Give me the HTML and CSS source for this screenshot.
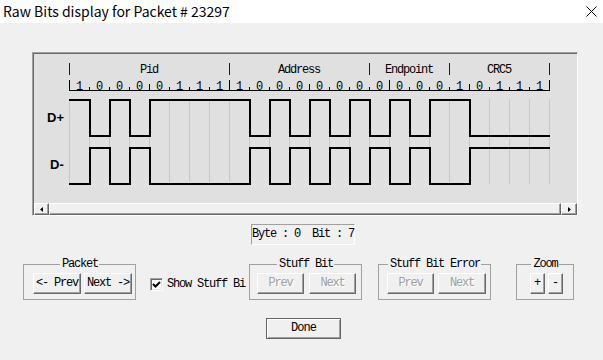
FILE: index.html
```html
<!DOCTYPE html>
<html>
<head>
<meta charset="utf-8">
<title>Raw Bits display</title>
<link rel="stylesheet" href="styles.css">
</head>
<body>
<div class="titlebar">
  <span class="title">Raw Bits display for Packet # 23297</span>
  <svg class="close" viewBox="0 0 11 11"><path d="M0.5 0.5L10.5 10.5M10.5 0.5L0.5 10.5" stroke="#000" stroke-width="1" fill="none"/></svg>
</div>
<div class="main">
  <div class="panel">
    <div class="panel-inner">
      <svg class="wave" width="543" height="149" viewBox="0 0 543 149">
        <g class="seg-ticks"><path d="M35.5 9V21M195.5 9V21M335.5 9V21M415.5 9V21M515.5 9V21" stroke="#0000ff" stroke-width="1" fill="none"/></g>
        <g class="seg-labels">
          <text x="115" y="19">Pid</text>
          <text x="265" y="19">Address</text>
          <text x="375" y="19">Endpoint</text>
          <text x="465" y="19">CRC5</text>
        </g>
        <path class="ruler" d="M35.5 26V37M55.5 33V37M75.5 33V37M95.5 33V37M115.5 30V37M135.5 33V37M155.5 33V37M175.5 33V37M195.5 26V37M215.5 33V37M235.5 33V37M255.5 33V37M275.5 30V37M295.5 33V37M315.5 33V37M335.5 33V37M355.5 26V37M375.5 33V37M395.5 33V37M415.5 33V37M435.5 30V37M455.5 33V37M475.5 33V37M495.5 33V37M515.5 26V37M35 36.5H516"/>
        <g class="bits">
          <text x="45" y="36">1</text><text x="65" y="36">0</text><text x="85" y="36">0</text><text x="105" y="36">0</text>
          <text x="125" y="36">0</text><text x="145" y="36">1</text><text x="165" y="36">1</text><text x="185" y="36">1</text>
          <text x="205" y="36">1</text><text x="225" y="36">0</text><text x="245" y="36">0</text><text x="265" y="36">0</text>
          <text x="285" y="36">0</text><text x="305" y="36">0</text><text x="325" y="36">0</text><text x="345" y="36">0</text>
          <text x="365" y="36">0</text><text x="385" y="36">0</text><text x="405" y="36">0</text><text x="425" y="36">1</text>
          <text x="445" y="36">0</text><text x="465" y="36">1</text><text x="485" y="36">1</text><text x="505" y="36">1</text>
        </g>
        <path class="grid" d="M35.5 45V130M55.5 45V130M75.5 45V130M95.5 45V130M115.5 45V130M135.5 45V130M155.5 45V130M175.5 45V130M195.5 45V130M215.5 45V130M235.5 45V130M255.5 45V130M275.5 45V130M295.5 45V130M315.5 45V130M335.5 45V130M355.5 45V130M375.5 45V130M395.5 45V130M415.5 45V130M435.5 45V130M455.5 45V130M475.5 45V130M495.5 45V130M515.5 45V130"/>
        <path class="signal" d="M35 46H56V82H76V46H96V82H116V46H216V82H236V46H256V82H276V46H296V82H316V46H336V82H356V46H376V82H396V46H436V82H516"/>
        <path class="signal" d="M35 130H56V94H76V130H96V94H116V130H216V94H236V130H256V94H276V130H296V94H316V130H336V94H356V130H376V94H396V130H436V94H516"/>
        <text class="line-label" x="13" y="68">D+</text>
        <text class="line-label" x="16" y="115">D-</text>
      </svg>
      <div class="scrollbar">
        <div class="sb-btn"><svg width="3" height="5" viewBox="0 0 3 5"><polygon points="0,2.5 3,0 3,5" fill="#000"/></svg></div>
        <div class="sb-thumb"></div>
        <div class="sb-btn sb-right"><svg width="3" height="5" viewBox="0 0 3 5"><polygon points="3,2.5 0,0 0,5" fill="#000"/></svg></div>
      </div>
    </div>
  </div>

  <div class="readout">Byte : 0  Bit : 7</div>

  <div class="controls">
    <fieldset class="group g-packet">
      <legend>Packet</legend>
      <button class="btn w48">&lt;- Prev</button>
      <button class="btn w48">Next -&gt;</button>
    </fieldset>
    <label class="check">
      <span class="box"><svg width="9" height="9" viewBox="0 0 9 9"><path d="M1 4L3.5 6.5L8 2" stroke="#000" stroke-width="2" fill="none"/></svg></span>
      <span class="check-text">Show Stuff Bi</span>
    </label>
    <fieldset class="group g-stuff">
      <legend>Stuff Bit</legend>
      <button class="btn w47" disabled>Prev</button>
      <button class="btn w47" disabled>Next</button>
    </fieldset>
    <fieldset class="group g-err">
      <legend>Stuff Bit Error</legend>
      <button class="btn w47" disabled>Prev</button>
      <button class="btn w48" disabled>Next</button>
    </fieldset>
    <fieldset class="group g-zoom">
      <legend>Zoom</legend>
      <button class="btn w15">+</button>
      <button class="btn w15">-</button>
    </fieldset>
  </div>

  <button class="btn done">Done</button>
</div>
</body>
</html>
```

FILE: styles.css
```css
* { box-sizing: border-box; }
html, body { margin: 0; padding: 0; }
body {
  width: 603px;
  height: 360px;
  background: #f0f0f0;
  overflow: hidden;
  font-family: "Liberation Mono", monospace;
  font-size: 12px;
  color: #000;
}

.titlebar {
  height: 23px;
  background: #fff;
  display: flex;
  align-items: center;
  justify-content: space-between;
  padding: 0 6px 0 3px;
}
.title {
  font-family: "Noto Sans CJK SC", "Noto Sans", sans-serif;
  font-size: 14px;
  line-height: 23px;
  color: #000;
}
.close { width: 11px; height: 11px; display: block; }

.main { display: flex; flex-direction: column; align-items: flex-start; }

.panel {
  margin: 29px 0 0 32px;
  width: 546px;
  height: 164px;
  border-style: solid;
  border-width: 1px;
  border-color: #a0a0a0 #ffffff #ffffff #a0a0a0;
}
.panel-inner {
  height: 100%;
  border-top: 1px solid #696969;
  border-left: 1px solid #696969;
  background: #e0e0e0;
  display: flex;
  flex-direction: column;
}
.wave { display: block; flex: none; }
.wave text {
  font-family: "Liberation Mono", monospace;
  font-size: 12px;
  letter-spacing: -1.2px;
  text-anchor: middle;
  fill: #000;
}
.wave .line-label {
  font-family: "Liberation Sans", Arial, sans-serif;
  font-weight: bold;
  font-size: 13px;
  letter-spacing: 0;
  text-anchor: start;
}
.ruler { stroke: #000; stroke-width: 1; fill: none; }
.grid { stroke: #c8c8c8; stroke-width: 1; fill: none; }
.signal { stroke: #000; stroke-width: 2; fill: none; }

.scrollbar {
  height: 12px;
  display: flex;
  background: #f0f0f0;
  flex: none;
}
.sb-btn, .sb-thumb, .btn {
  background: #f0f0f0;
  border-style: solid;
  border-width: 1px;
  border-color: #ffffff #696969 #696969 #ffffff;
  box-shadow: inset -1px -1px 0 #a0a0a0;
}
.sb-btn {
  width: 15px;
  display: flex;
  align-items: center;
  justify-content: center;
}
.sb-btn svg { display: block; }
.sb-right { width: 16px; }
.sb-thumb { flex: 1; }

.readout {
  margin: 8px 0 0 251px;
  width: 104px;
  height: 21px;
  border-style: solid;
  border-width: 1px;
  border-color: #a0a0a0 #ffffff #ffffff #a0a0a0;
  white-space: pre;
  line-height: 19px;
  letter-spacing: -1.2px;
}

.controls {
  display: flex;
  align-items: flex-start;
  margin-top: 13px;
  padding-left: 23px;
}
.group {
  margin: 0;
  min-width: 0;
  height: 42px;
  padding: 3px 0 5px;
  border: 1px solid #a0a0a0;
  display: flex;
}
.group legend {
  margin: 0 auto;
  padding: 0 1px 0 2px;
  font-size: 12px;
  line-height: 12px;
  letter-spacing: -1.2px;
}
.g-packet { width: 113px; gap: 3px; }
.g-stuff { width: 113px; gap: 5px; }
.g-err { width: 113px; margin-left: 16px; gap: 4px; }
.g-zoom { width: 58px; margin-left: 25px; gap: 3px; }
.g-packet > .btn:first-of-type { margin-left: 9px; }
.g-stuff > .btn:first-of-type { margin-left: 7px; }
.g-err > .btn:first-of-type { margin-left: 8px; }
.g-zoom > .btn:first-of-type { margin-left: 13px; }

.btn {
  height: 21px;
  padding: 0;
  font-family: "Liberation Mono", monospace;
  font-size: 12px;
  letter-spacing: -1.2px;
  color: #000;
  line-height: 19px;
}
.btn:disabled { color: #a0a0a0; text-shadow: 1px 1px 0 #fff; }
.w48 { width: 48px; }
.w47 { width: 47px; }
.w15 { width: 15px; letter-spacing: 0; }

.check {
  display: flex;
  align-items: center;
  gap: 4px;
  width: 99px;
  margin: 19px 0 0 14px;
  white-space: nowrap;
  letter-spacing: -1.2px;
}
.box {
  flex: none;
  width: 13px;
  height: 13px;
  border-style: solid;
  border-width: 1px;
  border-color: #a0a0a0 #ffffff #ffffff #a0a0a0;
  background: #fff;
  box-shadow: inset 1px 1px 0 #696969, inset -1px -1px 0 #e3e3e3;
  display: flex;
  align-items: center;
  justify-content: center;
}
.box svg { display: block; }

.done {
  margin: 18px 0 0 266px;
  width: 75px;
  border: 1px solid #646464;
  box-shadow: inset 1px 1px 0 #ffffff, inset -1px -1px 0 #a0a0a0;
  letter-spacing: -1px;
}
```
